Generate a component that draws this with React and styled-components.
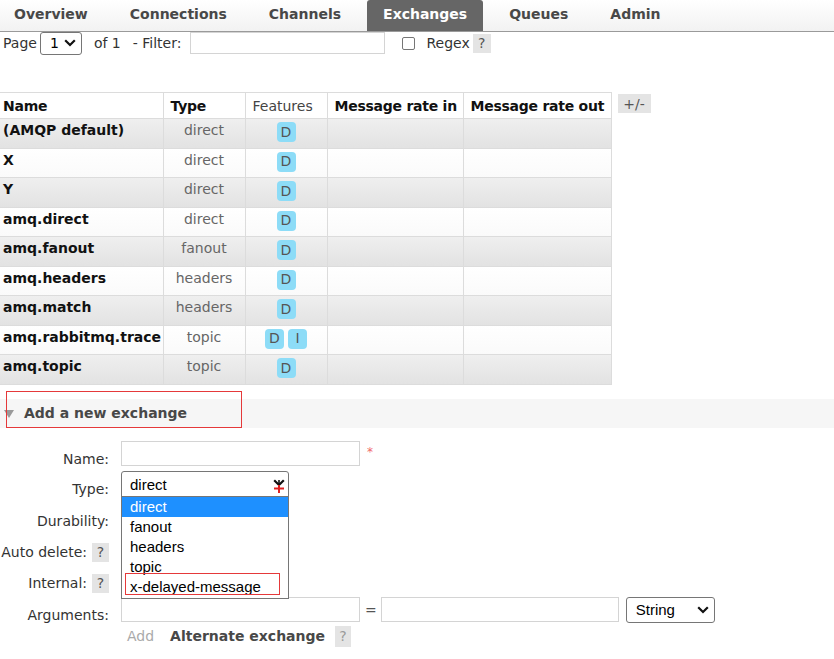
import React from 'react';
import styled, { createGlobalStyle } from 'styled-components';

const Global = createGlobalStyle`
  html, body { margin: 0; padding: 0; background: #fff; }
  body { font-family: "DejaVu Sans", Verdana, sans-serif; font-size: 14px; color: #333; }
  * { box-sizing: border-box; }
`;

const Page = styled.div`
  width: 834px;
  min-height: 659px;
  overflow: hidden;
`;

/* ---------- Nav ---------- */
const Nav = styled.nav`
  height: 32px;
  border-bottom: 1px solid #9a9a9a;
  background: linear-gradient(#ffffff, #f2f2f2);
`;
const Tabs = styled.ul`
  list-style: none;
  margin: 0 0 0 -2px;
  padding: 0;
  display: flex;
  gap: 10px;
  height: 31px;
`;
const Tab = styled.li`
  display: flex;
  align-items: center;
  height: 31px;
  padding: 0 16px 4px;
  font-weight: bold;
  white-space: nowrap;
  color: ${p => (p.$active ? '#fff' : '#484848')};
  background: ${p => (p.$active ? '#666' : 'transparent')};
  border-radius: 3px 3px 0 0;
`;

/* ---------- Pager ---------- */
const Pager = styled.div`
  display: flex;
  align-items: center;
  height: 22px;
  padding-left: 3px;
  white-space: nowrap;
`;
const Text = styled.span`
  margin-left: ${p => p.$ml || 0}px;
  color: ${p => p.$color || '#333'};
  font-weight: ${p => (p.$bold ? 'bold' : 'normal')};
`;
const MiniSelect = styled.div`
  display: flex;
  align-items: center;
  justify-content: space-between;
  width: ${p => p.$w}px;
  height: ${p => p.$h}px;
  margin-left: ${p => p.$ml || 0}px;
  padding: 0 5px 0 ${p => p.$pl || 9}px;
  border: 1px solid #767676;
  border-radius: 3px;
  background: #fff;
  color: #000;
  font-family: ${p => (p.$arial ? '"Liberation Sans", Arial, sans-serif' : 'inherit')};
  font-size: ${p => (p.$arial ? 15 : 14)}px;
  flex: none;
`;
const TextInput = styled.div`
  width: ${p => p.$w}px;
  height: ${p => p.$h || 25}px;
  margin-left: ${p => p.$ml || 0}px;
  border: 1px solid #d4d4d4;
  background: #fff;
  flex: none;
`;
const Check = styled.span`
  display: inline-block;
  width: 13px;
  height: 13px;
  margin-left: ${p => p.$ml || 0}px;
  border: 1px solid #767676;
  border-radius: 2px;
  background: #fff;
`;
const Help = styled.span`
  display: inline-flex;
  align-items: center;
  justify-content: center;
  width: ${p => p.$w || 17}px;
  height: ${p => p.$h || 19}px;
  margin-left: ${p => p.$ml || 0}px;
  background: #e4e4e4;
  color: ${p => (p.$light ? '#9a9a9a' : '#555')};
  font-size: 14px;
  flex: none;
`;

/* ---------- Table ---------- */
const TableBlock = styled.div`
  display: flex;
  align-items: flex-start;
  gap: 6px;
  margin-top: 38px;
`;
const Table = styled.table`
  border-collapse: collapse;
  table-layout: fixed;
  width: 611px;
  white-space: nowrap;
`;
const Th = styled.th`
  height: 26px;
  padding: 0 0 0 ${p => p.$pl ?? 7}px;
  text-align: left;
  vertical-align: middle;
  font-weight: ${p => (p.$normal ? 'normal' : 'bold')};
  color: ${p => (p.$normal ? '#444' : '#111')};
  letter-spacing: ${p => (p.$normal ? 0 : -0.25)}px;
  border: 1px solid #dcdcdc;
  border-left: ${p => (p.$first ? 'none' : '1px solid #dcdcdc')};
  background: #fff;
`;
const Tr = styled.tr`
  height: 29.56px;
  background: ${p =>
    p.$alt
      ? 'linear-gradient(#efefef, #e2e2e2)'
      : 'linear-gradient(#ffffff, #fafafa)'};
`;
const Td = styled.td`
  padding: 2px ${p => (p.$first ? 0 : 4)}px 0 ${p => (p.$first ? 3 : 4)}px;
  vertical-align: top;
  text-align: ${p => p.$align || 'left'};
  font-weight: ${p => (p.$bold ? 'bold' : 'normal')};
  color: ${p => p.$color || '#111'};
  border: 1px solid #dcdcdc;
  border-left: ${p => (p.$first ? 'none' : '1px solid #dcdcdc')};
  line-height: 19px;
`;
const Badges = styled.div`
  display: flex;
  justify-content: center;
  gap: 4px;
  padding-top: 1px;
`;
const Badge = styled.abbr`
  display: inline-flex;
  align-items: center;
  justify-content: center;
  width: 19px;
  height: 20px;
  border-radius: 4px;
  background: #8ddcf7;
  color: #555;
  text-decoration: none;
  font-size: 14px;
`;
const Toggle = styled.span`
  display: inline-flex;
  align-items: center;
  justify-content: center;
  width: 33px;
  height: 19px;
  margin-top: 2px;
  background: #e4e4e4;
  color: #555;
`;

/* ---------- Section ---------- */
const SectionWrap = styled.div`
  position: relative;
  margin-top: 14px;
`;
const SectionHead = styled.h2`
  margin: 0;
  height: 29px;
  display: flex;
  align-items: center;
  padding-left: 4px;
  background: #f6f6f6;
  font-size: 14px;
  font-weight: bold;
  color: #484848;
`;
const Triangle = styled.span`
  width: 0;
  height: 0;
  margin-right: 10px;
  margin-top: 2px;
  border-left: 5.5px solid transparent;
  border-right: 5.5px solid transparent;
  border-top: 8px solid #9a9a9a;
`;
const Annotation = styled.div`
  position: absolute;
  left: ${p => p.$l}px;
  top: ${p => p.$t}px;
  width: ${p => p.$w}px;
  height: ${p => p.$h}px;
  border: 1px solid #e5393a;
  pointer-events: none;
`;

/* ---------- Form ---------- */
const Form = styled.div`
  display: grid;
  grid-template-columns: 109px 1fr;
  grid-template-rows: 25px repeat(5, 26px);
  column-gap: 12px;
  row-gap: 5.4px;
  margin-top: 13px;
`;
const Label = styled.div`
  display: flex;
  justify-content: flex-end;
  align-items: center;
  gap: 5px;
  height: 26px;
  padding-top: 10px;
  white-space: nowrap;
  color: #333;
`;
const Field = styled.div`
  position: relative;
  display: flex;
  align-items: center;
  z-index: ${p => p.$z || 0};
`;
const Required = styled.span`
  margin-left: 7px;
  align-self: flex-start;
  padding-top: 4px;
  color: #f06a6a;
  font-size: 12px;
`;
const TypeSelect = styled.div`
  position: relative;
  width: 168px;
  height: 26px;
  padding-left: 8px;
  display: flex;
  align-items: center;
  border: 1px solid #767676;
  border-radius: 3px 3px 0 0;
  background: #fff;
  font-family: "Liberation Sans", Arial, sans-serif;
  font-size: 15px;
  color: #000;
`;
const Chevron = styled.svg`
  position: ${p => (p.$abs ? 'absolute' : 'static')};
  right: 3px;
  top: 7px;
`;
const Cursor = styled.svg`
  position: absolute;
  left: 151px;
  top: 8px;
`;
const DropList = styled.ul`
  position: absolute;
  left: -1px;
  top: 24px;
  width: 168px;
  margin: 0;
  padding: 0 0 2px;
  list-style: none;
  border: 1px solid #767676;
  background: #fff;
  z-index: 20;
`;
const Option = styled.li`
  position: relative;
  height: 19.8px;
  line-height: 19px;
  padding-left: 8px;
  font-family: "Liberation Sans", Arial, sans-serif;
  font-size: 15px;
  color: ${p => (p.$sel ? '#fff' : '#000')};
  background: ${p => (p.$sel ? '#1e90ff' : '#fff')};
`;
const Equals = styled.span`
  margin: 0 4px 0 5px;
  color: #555;
`;
const AddRow = styled.div`
  display: flex;
  align-items: center;
  height: 21px;
  margin-top: 3px;
  padding-left: 127px;
  white-space: nowrap;
`;

const ChevronIcon = ({ abs }) => (
  <Chevron $abs={abs} width="12" height="8" viewBox="0 0 12 8">
    <path d="M1.2 1.2 L6 6 L10.8 1.2" fill="none" stroke="#111" strokeWidth="2.2" />
  </Chevron>
);

const exchanges = [
  { name: '(AMQP default)', type: 'direct', f: ['D'] },
  { name: 'X', type: 'direct', f: ['D'] },
  { name: 'Y', type: 'direct', f: ['D'] },
  { name: 'amq.direct', type: 'direct', f: ['D'] },
  { name: 'amq.fanout', type: 'fanout', f: ['D'] },
  { name: 'amq.headers', type: 'headers', f: ['D'] },
  { name: 'amq.match', type: 'headers', f: ['D'] },
  { name: 'amq.rabbitmq.trace', type: 'topic', f: ['D', 'I'] },
  { name: 'amq.topic', type: 'topic', f: ['D'] },
];

const tabs = ['Overview', 'Connections', 'Channels', 'Exchanges', 'Queues', 'Admin'];

export default function App() {
  return (
    <Page>
      <Global />
      <Nav>
        <Tabs>
          {tabs.map(t => (
            <Tab key={t} $active={t === 'Exchanges'}>{t}</Tab>
          ))}
        </Tabs>
      </Nav>

      <Pager>
        <Text>Page</Text>
        <MiniSelect $w={42} $h={23} $ml={3}>
          1 <ChevronIcon />
        </MiniSelect>
        <Text $ml={12}>of 1</Text>
        <Text $ml={12}>- Filter:</Text>
        <TextInput $w={195} $h={22} $ml={9} />
        <Check $ml={17} />
        <Text $ml={11}>Regex</Text>
        <Help $ml={3} $w={18}>?</Help>
      </Pager>

      <TableBlock>
        <Table>
          <colgroup>
            <col style={{ width: 163 }} />
            <col style={{ width: 82 }} />
            <col style={{ width: 82 }} />
            <col style={{ width: 136 }} />
            <col style={{ width: 148 }} />
          </colgroup>
          <thead>
            <tr>
              <Th $first $pl={3}>Name</Th>
              <Th>Type</Th>
              <Th $normal>Features</Th>
              <Th>Message rate in</Th>
              <Th>Message rate out</Th>
            </tr>
          </thead>
          <tbody>
            {exchanges.map((e, i) => (
              <Tr key={e.name} $alt={i % 2 === 0}>
                <Td $first $bold>{e.name}</Td>
                <Td $align="center" $color="#666">{e.type}</Td>
                <Td $align="center">
                  <Badges>
                    {e.f.map(x => (
                      <Badge key={x} title={x === 'D' ? 'durable: true' : 'internal: true'}>{x}</Badge>
                    ))}
                  </Badges>
                </Td>
                <Td />
                <Td />
              </Tr>
            ))}
          </tbody>
        </Table>
        <Toggle>+/-</Toggle>
      </TableBlock>

      <SectionWrap>
        <SectionHead>
          <Triangle />
          Add a new exchange
        </SectionHead>
        <Annotation $l={6} $t={-8} $w={236} $h={37} />
      </SectionWrap>

      <Form>
        <Label>Name:</Label>
        <Field>
          <TextInput $w={239} />
          <Required>*</Required>
        </Field>

        <Label>Type:</Label>
        <Field $z={5}>
          <TypeSelect>
            direct
            <ChevronIcon abs />
            <Cursor width="12" height="14" viewBox="0 0 12 14">
              <path d="M6 0 V8" stroke="#111" strokeWidth="1.6" />
              <path d="M1 8.5 H11" stroke="#e02020" strokeWidth="2" />
              <path d="M6 5 V13" stroke="#e02020" strokeWidth="2" />
            </Cursor>
            <DropList>
              <Option $sel>direct</Option>
              <Option>fanout</Option>
              <Option>headers</Option>
              <Option>topic</Option>
              <Option>
                x-delayed-message
                <Annotation $l={3} $t={-4} $w={155} $h={22} />
              </Option>
            </DropList>
          </TypeSelect>
        </Field>

        <Label>Durability:</Label>
        <Field />

        <Label>Auto delete: <Help>?</Help></Label>
        <Field />

        <Label>Internal: <Help>?</Help></Label>
        <Field />

        <Label>Arguments:</Label>
        <Field>
          <TextInput $w={239} />
          <Equals>=</Equals>
          <TextInput $w={238} />
          <MiniSelect $w={89} $h={26} $ml={7} $arial>
            String <ChevronIcon />
          </MiniSelect>
        </Field>
      </Form>

      <AddRow>
        <Text $color="#aaa">Add</Text>
        <Text $ml={16} $bold $color="#484848">Alternate exchange</Text>
        <Help $ml={10} $w={16} $h={21} $light>?</Help>
      </AddRow>
    </Page>
  );
}
